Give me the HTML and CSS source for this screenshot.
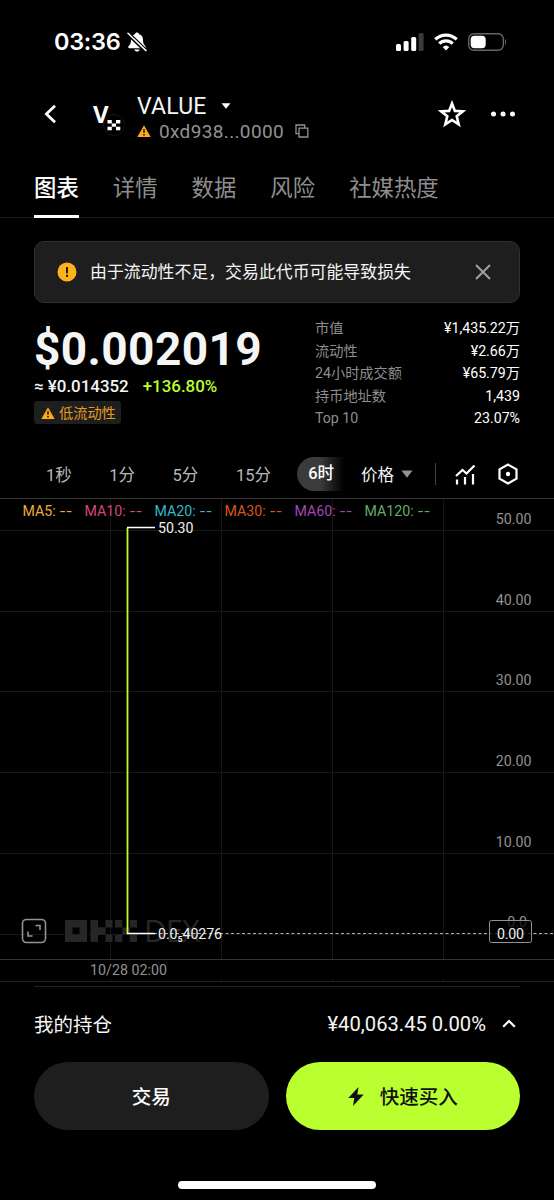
FILE: index.html
```
<!DOCTYPE html>
<html lang="zh-CN">
<head>
  <meta charset="UTF-8" />
  <meta name="viewport" content="width=device-width, initial-scale=1.0"/>
  <title>VALUE</title>
  <link rel="stylesheet" href="styles.css">
</head>
<body>
  <div class="phone">
    <div class="status-bar">
      <span class="time">03:36</span>
      <svg class="bell" width="20" height="20" viewBox="0 0 20 20">
        <path d="M10 .5c-1 0-1.700.6-1.900 1.400C5.200 2.800 4 5 4 8c0 3.500-1 4.700-2.300 6-.9 1-.5 2.200.8 2.200h15c1.300 0 1.700-1.200.8-2.200C17 12.700 16 11.500 16 8c0-3-1.200-5.200-4.100-6.100C11.700 1.100 11 .5 10 .5zM7.300 17.500h5.400c-.4 1.400-1.400 2.100-2.700 2.100s-2.300-.7-2.700-2.100z" fill="#fff"/>
        <path d="M.8 1.300l18 17.400" stroke="#000" stroke-width="4.200"/>
        <path d="M1 1.200l18 17.400" stroke="#fff" stroke-width="1.500" stroke-linecap="round"/>
      </svg>
      <div class="status-icons">
        <svg width="28" height="18" viewBox="0 0 28 18" fill="#fff">
          <rect x="0" y="11" width="5" height="7" rx="1.500"/>
          <rect x="7.600" y="8" width="5" height="10" rx="1.500"/>
          <rect x="15.200" y="4" width="5" height="14" rx="1.500"/>
          <rect x="22.600" y="0" width="5" height="18" rx="1.500" fill="#3a3a3a"/>
        </svg>
        <svg class="wifi" width="24" height="18" viewBox="0 0 24 18" fill="none" stroke="#fff" stroke-width="3.200">
          <path d="M1.300 6.400a15.300 15.300 0 0 1 21.400 0"/>
          <path d="M5.300 10.600a9.600 9.600 0 0 1 13.400 0"/>
          <path d="M12 17.500l-3.300-3.400a4.800 4.800 0 0 1 6.600 0z" fill="#fff" stroke="none"/>
        </svg>
        <svg width="40" height="18" viewBox="0 0 40 18">
          <rect x=".7" y=".7" width="34.600" height="16.600" rx="5.200" fill="none" stroke="#666" stroke-width="1.400"/>
          <rect x="2.700" y="2.700" width="15" height="12.600" rx="3.700" fill="#fff"/>
          <path d="M37 6c1.400.5 1.400 5.500 0 6z" fill="#666"/>
        </svg>
      </div>
    </div>

    <header class="header">
      <svg class="back" width="14" height="20" viewBox="0 0 14 20" fill="none" stroke="#fff" stroke-width="2.800">
        <path d="M11 1.800L2.400 10l8.600 8.200"/>
      </svg>
      <div class="logo">
        <span>V</span>
        <svg class="chain" width="22" height="22" viewBox="0 0 22 22">
          <circle cx="11" cy="11" r="10.500" fill="#000" stroke="#151515"/>
          <path d="M4.500 6h4.300v3.600H4.500zM13 6h4.300v3.600H13zM8.800 9.600H13v3.200H8.800zM4.500 12.800h4.300v3.400H4.500zM13 12.800h4.300v3.400H13z" fill="#fff"/>
        </svg>
      </div>
      <div class="token">
        <div class="token-name">VALUE
          <svg width="10" height="6" viewBox="0 0 10 6"><path d="M.5.300h9L5 5.700z" fill="#fff"/></svg>
        </div>
        <div class="token-address">
          <svg width="14" height="12" viewBox="0 0 14 12"><path d="M7 .2L13.700 12H.3z" fill="#ffa91a"/><path d="M7 4.200v3.600M7 9v1.500" stroke="#201600" stroke-width="1.600"/></svg>
          <span>0xd938...0000</span>
          <svg class="copy" width="14" height="14" viewBox="0 0 14 14" fill="none" stroke="#929292" stroke-width="1.300"><path d="M4 4.200h8.800v8.800H4z"/><path d="M4 9.600H1V1h8.700v3"/></svg>
        </div>
      </div>
      <svg class="star" width="28" height="28" viewBox="0 0 28 28" fill="none" stroke="#fff" stroke-width="2.600">
        <path d="M14 3.500l2.900 7.400 8 .4-6.200 5 2 8-6.700-4.300-6.700 4.300 2-8-6.200-5 8-.4z"/>
      </svg>
      <svg width="24" height="6" viewBox="0 0 24 6" fill="#fff"><circle cx="2.500" cy="3" r="2.500"/><circle cx="12" cy="3" r="2.500"/><circle cx="21.500" cy="3" r="2.500"/></svg>
    </header>

    <nav class="tabs">
      <a class="tab active">图表</a>
      <a class="tab">详情</a>
      <a class="tab">数据</a>
      <a class="tab">风险</a>
      <a class="tab">社媒热度</a>
    </nav>

    <div class="alert">
      <svg width="20" height="20" viewBox="0 0 20 20"><circle cx="10" cy="10" r="9.500" fill="#ffb21a"/><path d="M10 5v6.200M10 12.700v2.200" stroke="#1e1e1e" stroke-width="2"/></svg>
      <span class="alert-text">由于流动性不足，交易此代币可能导致损失</span>
      <svg class="close" width="16" height="16" viewBox="0 0 16 16" stroke="#a0a0a0" stroke-width="2"><path d="M1 1l14 14M15 1L1 15"/></svg>
    </div>

    <section class="summary">
      <div class="price-block">
        <div class="price">$0.002019</div>
        <div class="price-sub"><span>≈ ¥0.014352</span><span class="up">+136.80%</span></div>
        <div class="badge">
          <svg width="14" height="12" viewBox="0 0 14 12"><path d="M7 .2L13.700 12H.3z" fill="#ffa91a"/><path d="M7 4.200v3.600M7 9v1.500" stroke="#201600" stroke-width="1.600"/></svg>
          <span>低流动性</span>
        </div>
      </div>
      <div class="stats">
        <div class="stat"><span>市值</span><b>¥1,435.22万</b></div>
        <div class="stat"><span>流动性</span><b>¥2.66万</b></div>
        <div class="stat"><span>24小时成交额</span><b>¥65.79万</b></div>
        <div class="stat"><span>持币地址数</span><b>1,439</b></div>
        <div class="stat"><span>Top 10</span><b>23.07%</b></div>
      </div>
    </section>

    <div class="toolbar">
      <div class="periods">
        <span>1秒</span>
        <span>1分</span>
        <span>5分</span>
        <span>15分</span>
        <span class="selected">6时</span>
      </div>
      <div class="price-type">价格
        <svg width="12" height="8" viewBox="0 0 12 8"><path d="M.5.500h11L6 7.700z" fill="#929292"/></svg>
      </div>
      <i class="divider"></i>
      <svg class="indicator" width="21" height="21" viewBox="0 0 21 21" fill="none" stroke="#fff" stroke-width="2.200">
        <path d="M1 12l6.500-6 4 3.500 8-8M2 15.500v5M10 13v7.500M18 10v10.500"/>
      </svg>
      <svg class="settings" width="22" height="22" viewBox="0 0 22 22" fill="none" stroke="#fff" stroke-width="2.200">
        <path d="M11 1.600l8.500 4.700v9.400L11 20.400l-8.500-4.700V6.300z"/><circle cx="11" cy="11" r="2.200" fill="#fff" stroke="none"/>
      </svg>
    </div>

    <div class="chart">
      <svg width="554" height="488" viewBox="0 0 554 488">
        <!-- grid -->
        <g class="grid">
          <path d="M110.500 0v461M221.500 0v461M332.500 0v461M443.500 0v461"/>
          <path d="M110.500 481v4M221.500 481v4M332.500 481v4M443.500 481v4"/>
          <path d="M0 32.500h554M0 113.500h554M0 193.500h554M0 274.500h554M0 355.500h554M0 436.500h554"/>
        </g>
        <path class="frame" d="M0 .5h554M0 461.500h554"/>
        <path class="frame-dim" d="M0 483.500h554"/>

        <!-- watermark -->
        <g class="mark">
          <path fill-rule="evenodd" d="M65 422h22v22H65zM72.500 429.500v7h7v-7z"/>
          <path d="M90.500 422H98v7.300h7.500V422h7v7.500h-7v7h7v7.500h-7v-7.300H98v7.300h-7.500z"/>
          <path d="M115 422h7.300v7.400H115zM129.700 422h7.300v7.400h-7.300zM122.300 429.400h7.400v7.300h-7.400zM115 436.700h7.300v7.300H115zM129.700 436.700h7.300v7.300h-7.300z"/>
          <text x="144" y="444" textLength="56">DEX</text>
        </g>

        <g class="ma">
          <text x="22.500" y="17.500" fill="#eaad3e">MA5: <tspan>--</tspan></text>
          <text x="84.500" y="17.500" fill="#d4457c">MA10: <tspan>--</tspan></text>
          <text x="154.500" y="17.500" fill="#35b8c8">MA20: <tspan>--</tspan></text>
          <text x="224.500" y="17.500" fill="#d75719">MA30: <tspan>--</tspan></text>
          <text x="294.500" y="17.500" fill="#a545b6">MA60: <tspan>--</tspan></text>
          <text x="364.500" y="17.500" fill="#62ae65">MA120: <tspan>--</tspan></text>
        </g>

        <g class="scale">
          <text x="531.500" y="26">50.00</text>
          <text x="531.500" y="106.500">40.00</text>
          <text x="531.500" y="187">30.00</text>
          <text x="531.500" y="268">20.00</text>
          <text x="531.500" y="348.500">10.00</text>
          <text x="527" y="429">0.0</text>
        </g>

        <path class="last-price" d="M154 435.500h400"/>
        <path class="candle" d="M127.500 30v406"/>
        <path class="marker" d="M127 29.500h28M127 435.500h28"/>
        <text class="value" x="158" y="34.500" textLength="35.500">50.30</text>
        <text class="value" x="158" y="440.500" textLength="64">0.0₅40276</text>

        <rect class="price-tag" x="489.500" y="422.500" width="42" height="22" rx="2"/>
        <text class="value" x="497" y="440.500" textLength="27">0.00</text>

        <!-- fullscreen -->
        <g class="expand">
          <rect x="22.500" y="421.500" width="23" height="23" rx="4"/>
          <path d="M35.500 427.500h4.500v4.500M28 433.500v4.500h4.500"/>
        </g>
        <text class="date" x="90" y="476.500" textLength="77">10/28 02:00</text>
      </svg>
    </div>

    <footer class="footer">
      <div class="holding">
        <span class="holding-label">我的持仓</span>
        <span class="holding-value">¥40,063.45 0.00%</span>
        <svg width="14" height="9" viewBox="0 0 14 9" fill="none" stroke="#fff" stroke-width="2.100"><path d="M1.200 7.700L7 2l5.800 5.700"/></svg>
      </div>
      <div class="actions">
        <button class="btn"><span>交易</span></button>
        <button class="btn buy">
          <svg width="16" height="19" viewBox="0 0 16 19"><path d="M10.500 0L.3 11h6L5 19 15.700 7.500H9.300z" fill="#111"/></svg>
          <span>快速买入</span>
        </button>
      </div>
      <div class="home-indicator"></div>
    </footer>
  </div>
</body>
</html>
```
FILE: styles.css
```
* {
  box-sizing: border-box;
}

body {
  margin: 0;
  background: #000;
  color: #f5f5f5;
  font-family: Roboto, "Noto Sans CJK SC", sans-serif;
}

svg {
  display: block;
  flex: none;
}

.phone {
  width: 554px;
  height: 1200px;
  display: flex;
  flex-direction: column;
  overflow: hidden;
}

/* status bar */
.status-bar {
  height: 83px;
  padding: 0 46px 0 54px;
  display: flex;
  align-items: center;
}

.time {
  width: 73px;
  font: 600 23.5px Inter, sans-serif;
  letter-spacing: -0.3px;
  color: #fff;
}

.status-icons {
  margin-left: auto;
  display: flex;
  gap: 10px;
}

/* header */
.header {
  height: 77px;
  padding: 0 39px 16px 44px;
  display: flex;
  align-items: center;
}

.logo {
  position: relative;
  width: 32px;
  margin-left: 35px;
  font: 700 24px "Noto Sans", sans-serif;
  color: #fff;
}

.chain {
  position: absolute;
  left: 10px;
  top: 17px;
}

.token {
  margin-left: 12px;
  padding-top: 9px;
}

.token-name,
.token-address {
  display: flex;
  align-items: center;
}

.token-name {
  height: 26px;
  gap: 14px;
  font-size: 23px;
  letter-spacing: 0.2px;
}

.token-address {
  height: 24px;
  font-size: 19px;
  color: #929292;
}

.token-address span {
  width: 127px;
  margin: 0 9px 0 8px;
  letter-spacing: 0.35px;
  white-space: nowrap;
}

.star {
  margin: 0 25px 0 auto;
}

/* tabs */
.tabs {
  height: 58px;
  padding-left: 34px;
  display: flex;
  gap: 34px;
  border-bottom: 1px solid #171717;
}

.tab {
  height: 58px;
  font-size: 22.4px;
  line-height: 57px;
  color: #8e8e8e;
}

.tab.active {
  color: #fff;
  font-weight: 500;
  border-bottom: 3px solid #fff;
}

/* alert */
.alert {
  height: 62px;
  margin: 23px 34px 0;
  padding: 0 28px 0 22px;
  display: flex;
  align-items: center;
  background: #1e1e1e;
  border: 1px solid #303030;
  border-radius: 10px;
}

.alert-text {
  margin-left: 13px;
  padding-bottom: 3px;
  font-size: 16.9px;
}

.close {
  margin-left: auto;
}

/* price and stats */
.summary {
  height: 147px;
  padding: 14px 34px 0;
  display: flex;
  justify-content: space-between;
}

.price {
  height: 58px;
  line-height: 65px;
  font-size: 46px;
  font-weight: 700;
  letter-spacing: 0.4px;
}

.price-sub {
  height: 26px;
  line-height: 22px;
  display: flex;
  gap: 14px;
  font-size: 16.9px;
  font-weight: 500;
}

.up {
  color: #baff2f;
}

.badge {
  width: 87px;
  height: 23px;
  padding-left: 7px;
  display: flex;
  align-items: center;
  gap: 4px;
  background: #1e1e1e;
  border-radius: 3px;
  color: #e69c20;
  font-size: 14.2px;
  white-space: nowrap;
}

.badge span {
  padding-bottom: 2px;
}

.stats {
  width: 205px;
}

.stat {
  height: 22.5px;
  line-height: 22.5px;
  display: flex;
  justify-content: space-between;
  font-size: 14.2px;
  color: #8e8e8e;
}

.stat b {
  font-weight: 400;
  color: #fff;
}

/* chart toolbar */
.toolbar {
  height: 48px;
  padding-left: 46px;
  display: flex;
  align-items: center;
  font-size: 16.5px;
}

.periods {
  width: 298px;
  display: flex;
  align-items: center;
  color: #b8b8b8;
  white-space: nowrap;
}

.periods span {
  flex: none;
  width: 63.3px;
}

.periods .selected {
  width: 47px;
  height: 34px;
  margin-left: -2px;
  padding-left: 11px;
  line-height: 33px;
  font-weight: 500;
  color: #fff;
  border-radius: 17px 0 0 17px;
  background: linear-gradient(90deg, #3b3b3b 50%, #000);
}

.price-type {
  margin-left: 17px;
  display: flex;
  align-items: center;
  gap: 7px;
}

.divider {
  width: 1px;
  height: 22px;
  margin: 0 19px 0 22px;
  background: #444;
}

.settings {
  margin-left: 21px;
}

/* chart */
.chart {
  height: 488px;
  font-size: 14.2px;
}

.grid {
  stroke: #171717;
}

.frame {
  stroke: #353535;
}

.frame-dim {
  stroke: #202020;
}

.mark {
  fill: #262626;
}

.mark text {
  font: 400 31px "Open Sans", sans-serif;
}

.ma tspan {
  font-family: Inter, sans-serif;
}

.scale {
  fill: #929292;
  text-anchor: end;
}

.last-price {
  stroke: #b0b0b0;
  stroke-dasharray: 3 2.5;
}

.candle {
  stroke: #baff2f;
  stroke-width: 1.8;
}

.marker {
  stroke: #fff;
  stroke-width: 1.6;
}

.value {
  fill: #f0f0f0;
}

.price-tag {
  fill: rgba(0, 0, 0, 0.75);
  stroke: #929292;
}

.expand {
  fill: none;
  stroke: #929292;
  stroke-width: 1.6;
}

.date {
  fill: #929292;
}

/* footer */
.footer {
  height: 214px;
  padding: 0 34px;
}

.holding {
  height: 76px;
  padding-bottom: 2px;
  display: flex;
  align-items: center;
  border-top: 1px solid #222;
}

.holding-label {
  font-size: 19.5px;
}

.holding-value {
  margin: 0 16px 0 auto;
  font-size: 20.2px;
}

.holding svg {
  margin-right: 4px;
}

.actions {
  display: flex;
  gap: 17px;
}

.btn {
  flex: 1;
  height: 68px;
  padding: 0;
  display: flex;
  justify-content: center;
  align-items: center;
  gap: 16px;
  border: none;
  border-radius: 34px;
  background: #1e1e1e;
  color: #fff;
  font-family: inherit;
  font-size: 19.5px;
  font-weight: 500;
}

.btn span {
  padding-bottom: 2px;
}

.btn.buy {
  background: #baff2f;
  color: #111;
}

.home-indicator {
  width: 198px;
  height: 8px;
  margin: 51px auto 0;
  border-radius: 4px;
  background: #fff;
}
```
